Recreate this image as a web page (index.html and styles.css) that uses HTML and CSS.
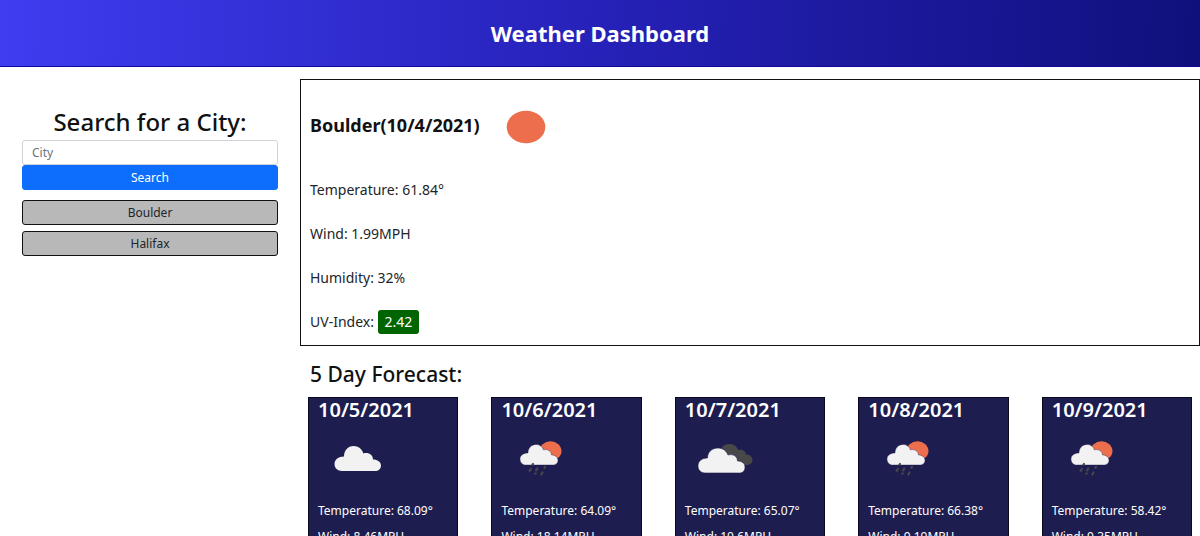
FILE: index.html
```html
<!DOCTYPE html>
<html lang="en">
<head>
<meta charset="utf-8">
<meta name="viewport" content="width=device-width, initial-scale=1">
<title>Weather Dashboard</title>
<link rel="stylesheet" href="styles.css">
</head>
<body>
<svg class="sprite" aria-hidden="true">
  <symbol id="clear" viewBox="0 0 40 34"><ellipse cx="20" cy="17" rx="19.300" ry="16.200" fill="#ec6e4c"/></symbol>
  <symbol id="cloud" viewBox="0 0 80 60">
    <path fill="#f2f2f2" d="M14 41C9.500 41 6.500 38 6.500 34C6.500 29.500 10.500 26.500 16 26.500C16 20.500 20 16 25.500 16C30.500 16 34 19 35.500 23.500C40.500 22 45 25 45 29.500C49.500 29.500 53 32 53 35.500C53 39 50.500 41 47 41Z"/>
  </symbol>
  <symbol id="broken" viewBox="0 0 80 60">
    <path fill="#484848" d="M27 18C28 15 31 14 34.500 14C39 14 42 16.500 43 20C47 19 51 21 51 24.500C55 24.500 57.500 27 57.500 30C57.500 33 55 35 51 35H35Z"/>
    <path fill="#f2f2f2" stroke="#1e1d4f" stroke-width=".6" d="M10 43C6 43 3 40 3 36C3 31 7 28 12.500 28C12.500 22 17 18 23 18C28 18 31.500 21 33 25C38 23.500 42.500 26.500 42.500 31C47 31 50 33.500 50 37C50 40.500 48 43 44.500 43Z"/>
  </symbol>
  <symbol id="rain" viewBox="0 0 80 60">
    <ellipse cx="39.500" cy="21" rx="11" ry="9.700" fill="#ec6e4c"/>
    <path fill="#f2f2f2" stroke="#1e1d4f" stroke-width=".4" d="M14.500 35C11.500 35 9 32.500 9 29C9 25.500 12.500 23 17 23C17 18 20.500 14.500 25 14.500C28.500 14.500 31.500 16.500 32.500 20C36.500 18.500 40.500 21.500 40.500 25C44.500 25 47 27.500 47 30.500C47 33 45 35 42 35Z"/>
    <path fill="none" stroke="#484848" stroke-width="2.200" stroke-linecap="round" d="M22 34l-.5.600M19.800 39l-1.200 1.800M26.300 38.500l-1.200 1.800M34 37l-.6.800M24.700 43.400l-.4.300M31.500 42.500l-1.200 1.800"/>
  </symbol>
</svg>
<div class="page">
  <header class="banner"><h1 class="banner-title">Weather Dashboard</h1></header>
  <div class="layout">
    <aside class="sidebar">
      <form class="search">
        <h2 class="search-title"><label for="city">Search for a City:</label></h2>
        <input class="field" id="city" type="text" placeholder="City">
        <button class="btn btn-primary" type="button">Search</button>
      </form>
      <div class="history">
        <button class="btn btn-city" type="button">Boulder</button>
        <button class="btn btn-city" type="button">Halifax</button>
      </div>
    </aside>
    <main class="content">
      <section class="current">
        <div class="current-head">
          <h2 class="current-title">Boulder(10/4/2021)</h2>
          <svg class="current-icon" role="img" aria-label="Clear sky"><use href="#clear"/></svg>
        </div>
        <p class="stat">Temperature: 61.84°</p>
        <p class="stat">Wind: 1.99MPH</p>
        <p class="stat">Humidity: 32%</p>
        <p class="stat">UV-Index: <span class="uv">2.42</span></p>
      </section>
      <section class="forecast">
        <h2 class="forecast-title">5 Day Forecast:</h2>
        <div class="cards">
          <article class="card"><h3 class="card-date">10/5/2021</h3><svg class="card-icon" role="img" aria-label="Cloudy"><use href="#cloud"/></svg><p class="card-stat">Temperature: 68.09°</p><p class="card-stat">Wind: 8.46MPH</p></article>
          <article class="card"><h3 class="card-date">10/6/2021</h3><svg class="card-icon" role="img" aria-label="Rain"><use href="#rain"/></svg><p class="card-stat">Temperature: 64.09°</p><p class="card-stat">Wind: 18.14MPH</p></article>
          <article class="card"><h3 class="card-date">10/7/2021</h3><svg class="card-icon" role="img" aria-label="Broken clouds"><use href="#broken"/></svg><p class="card-stat">Temperature: 65.07°</p><p class="card-stat">Wind: 10.6MPH</p></article>
          <article class="card"><h3 class="card-date">10/8/2021</h3><svg class="card-icon" role="img" aria-label="Rain"><use href="#rain"/></svg><p class="card-stat">Temperature: 66.38°</p><p class="card-stat">Wind: 9.19MPH</p></article>
          <article class="card"><h3 class="card-date">10/9/2021</h3><svg class="card-icon" role="img" aria-label="Rain"><use href="#rain"/></svg><p class="card-stat">Temperature: 58.42°</p><p class="card-stat">Wind: 9.35MPH</p></article>
        </div>
      </section>
    </main>
  </div>
</div>
</body>
</html>
```
FILE: styles.css
```css
* { box-sizing: border-box; }
body { margin: 0; background: #fff; color: #212529; font-family: "Noto Sans", "Open Sans", sans-serif; font-size: 14px; line-height: 20px; }
h1, h2, h3, p { margin: 0; }
.sprite { display: none; }
.page { height: 100vh; overflow: hidden; }
.banner { padding: 19px 0; border-bottom: 1px solid #10089c; background: linear-gradient(92deg, #3e3df0, #2621b8 50%, #10107c); color: #fff; text-align: center; }
.banner-title { font-size: 22px; line-height: 28px; font-weight: 700; }
.layout { display: grid; grid-template-columns: 1fr 3fr; padding-top: 12px; }
.sidebar { padding: 27px 22px 0; }
.search { display: flex; flex-direction: column; }
.search-title { margin-bottom: 2px; color: #111; font-size: 24px; line-height: 32px; font-weight: 500; text-align: center; }
.field, .btn { width: 100%; height: 25px; border: 1px solid #ced4da; border-radius: 3px; padding: 0 9px; font-family: inherit; font-size: 12px; line-height: 20px; }
.field { background: #fff; color: #212529; }
.field::placeholder { color: #6c757d; opacity: 1; }
.btn-primary { border-color: #0d6efd; background: #0d6efd; color: #fff; }
.history { display: flex; flex-direction: column; gap: 6px; margin-top: 10px; }
.btn-city { border-color: #111; background: #b8b8b8; color: #212529; }
.current { border: 1px solid #111; padding: 30px 9px 11px; }
.current-head { display: flex; align-items: flex-start; gap: 26px; margin-bottom: 34px; }
.current-title { color: #111; font-size: 18px; line-height: 30px; font-weight: 700; }
.current-icon { width: 40px; height: 34px; }
.stat { line-height: 24px; margin-bottom: 20px; }
.stat:last-child { margin-bottom: 0; }
.uv { display: inline-block; padding: 0 7px; border-radius: 3px; background: #006400; color: #fff; }
.forecast { padding: 14px 8px 0; }
.forecast-title { padding-left: 2px; margin-bottom: 9px; color: #111; font-size: 21px; line-height: 28px; font-weight: 500; }
.cards { display: flex; justify-content: space-between; }
.card { flex: 0 0 17%; border: 1px solid #0a0a1e; padding: 0 9px 16px; background: #1e1d4f; color: #fff; }
.card-date { font-size: 20px; line-height: 24px; font-weight: 600; }
.card-icon { display: block; width: 80px; height: 60px; margin: 8px 0 12px 10px; }
.card-stat { margin-bottom: 8px; font-size: 12px; line-height: 18px; }
```
